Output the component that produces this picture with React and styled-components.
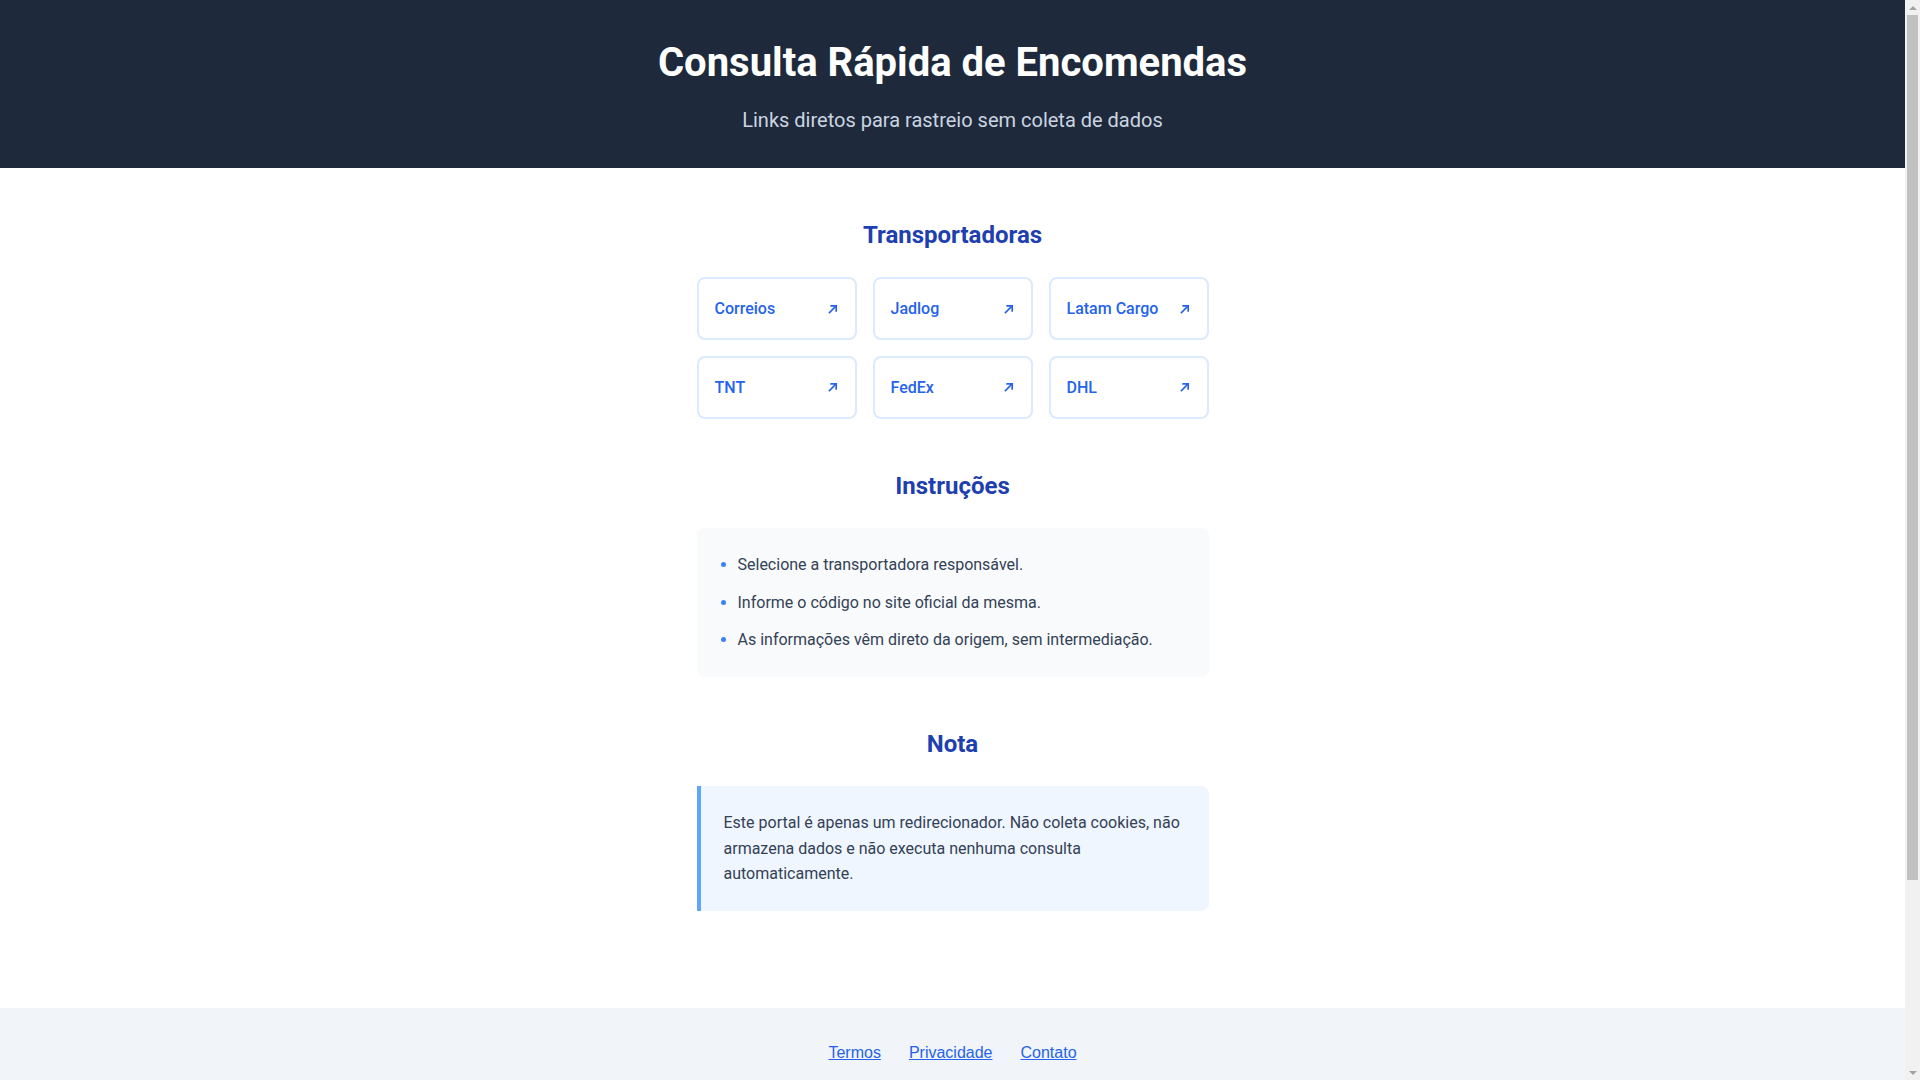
import React from "react";
import styled, { createGlobalStyle } from "styled-components";

const GlobalStyle = createGlobalStyle`
  html, body {
    margin: 0;
    padding: 0;
    background: #ffffff;
  }
  body {
    font-family: Roboto, "Noto Sans", Arial, sans-serif;
    line-height: 1.6;
    color: #334155;
  }
  * { box-sizing: border-box; }
`;

const Page = styled.div`
  display: flex;
  flex-direction: column;
  min-height: 100vh;
  margin-right: 15px;
`;

/* classic window scrollbar, drawn over the right edge of the viewport */
const ScrollTrack = styled.div`
  position: fixed;
  top: 0;
  right: 0;
  bottom: 0;
  width: 15px;
  background: #f1f1f1;
  display: flex;
  flex-direction: column;
  align-items: center;
  padding: 0 2px;
`;

const ScrollArrow = styled.div`
  flex: none;
  height: 15px;
  width: 100%;
  display: flex;
  align-items: center;
  justify-content: center;

  &::before {
    content: "";
    border-left: 4px solid transparent;
    border-right: 4px solid transparent;
    ${(p) =>
      p.$down
        ? "border-top: 4px solid #a3a3a3;"
        : "border-bottom: 4px solid #a3a3a3;"}
  }
`;

const ScrollThumb = styled.div`
  width: 100%;
  height: 865px;
  background: #c1c1c1;
`;

const ScrollSpacer = styled.div`
  flex: 1;
`;

const Header = styled.header`
  background: #1e293b;
  color: #ffffff;
  text-align: center;
  padding: 39px 16px 33px;
`;

const Title = styled.h1`
  margin: 0 0 18px;
  font-size: 40px;
  line-height: 48px;
  font-weight: 700;
`;

const Subtitle = styled.p`
  margin: 0;
  font-size: 20px;
  line-height: 30px;
  color: #cbd5e1;
`;

const Main = styled.main`
  width: 100%;
  max-width: 512px;
  margin: 0 auto;
  padding: 48px 0 97px;
  display: flex;
  flex-direction: column;
  gap: 48px;
`;

const Section = styled.section`
  display: flex;
  flex-direction: column;
`;

const SectionTitle = styled.h2`
  margin: 0 0 23px;
  font-size: 24px;
  line-height: 38.4px;
  font-weight: 700;
  color: #1e40af;
  text-align: center;
`;

const CarrierGrid = styled.div`
  display: grid;
  grid-template-columns: repeat(3, 1fr);
  gap: 16px;
`;

const CarrierLink = styled.a`
  display: flex;
  align-items: center;
  justify-content: space-between;
  padding: 16.5px 16px;
  border: 2px solid #dbeafe;
  border-radius: 8px;
  background: #ffffff;
  color: #2563eb;
  font-size: 16px;
  line-height: 25.6px;
  font-weight: 500;
  text-decoration: none;
`;

const ArrowIcon = styled.svg`
  width: 12px;
  height: 12px;
  flex: none;
  color: #2563eb;
`;

const InfoBox = styled.ul`
  margin: 0;
  list-style: none;
  background: #f8fafc;
  border-radius: 8px;
  padding: 24px;
  display: flex;
  flex-direction: column;
  gap: 12px;
`;

const InfoItem = styled.li`
  display: flex;
  align-items: center;
  gap: 12px;
  font-size: 16px;
  line-height: 25.6px;
  color: #334155;

  &::before {
    content: "";
    width: 5px;
    height: 5px;
    border-radius: 50%;
    background: #3b82f6;
    flex: none;
  }
`;

const NoteBox = styled.div`
  background: #eff6ff;
  border-left: 4px solid #60a5fa;
  border-radius: 0 8px 8px 0;
  padding: 24px 24px 24px 23px;
`;

const NoteText = styled.p`
  margin: 0;
  font-size: 16px;
  line-height: 25.6px;
  color: #334155;
`;

const Footer = styled.footer`
  background: #f1f5f9;
  padding: 32px 16px;
  min-height: 307px;
`;

const FooterNav = styled.nav`
  display: flex;
  justify-content: center;
  gap: 28px;
`;

const FooterLink = styled.a`
  font-family: "Liberation Sans", Arial, sans-serif;
  font-size: 16px;
  line-height: 25.6px;
  color: #2563eb;
  text-decoration: underline;
`;

const Arrow = () => (
  <ArrowIcon viewBox="0 0 12 12" fill="none" stroke="currentColor" strokeWidth="1.7" strokeLinecap="square">
    <path d="M2.5 9.5 L9 3" />
    <path d="M4.2 2.8 H9.2 V7.8" />
  </ArrowIcon>
);

const carriers = ["Correios", "Jadlog", "Latam Cargo", "TNT", "FedEx", "DHL"];

const instructions = [
  "Selecione a transportadora responsável.",
  "Informe o código no site oficial da mesma.",
  "As informações vêm direto da origem, sem intermediação.",
];

export default function App() {
  return (
    <>
      <GlobalStyle />
      <Page>
        <Header>
          <Title>Consulta Rápida de Encomendas</Title>
          <Subtitle>Links diretos para rastreio sem coleta de dados</Subtitle>
        </Header>
        <Main>
          <Section>
            <SectionTitle>Transportadoras</SectionTitle>
            <CarrierGrid>
              {carriers.map((c) => (
                <CarrierLink key={c} href="#">
                  <span>{c}</span>
                  <Arrow />
                </CarrierLink>
              ))}
            </CarrierGrid>
          </Section>
          <Section>
            <SectionTitle>Instruções</SectionTitle>
            <InfoBox>
              {instructions.map((t) => (
                <InfoItem key={t}>{t}</InfoItem>
              ))}
            </InfoBox>
          </Section>
          <Section>
            <SectionTitle>Nota</SectionTitle>
            <NoteBox>
              <NoteText>
                Este portal é apenas um redirecionador. Não coleta cookies, não armazena dados e não executa nenhuma
                consulta automaticamente.
              </NoteText>
            </NoteBox>
          </Section>
        </Main>
        <Footer>
          <FooterNav>
            <FooterLink href="#">Termos</FooterLink>
            <FooterLink href="#">Privacidade</FooterLink>
            <FooterLink href="#">Contato</FooterLink>
          </FooterNav>
        </Footer>
      </Page>
      <ScrollTrack aria-hidden="true">
        <ScrollArrow />
        <ScrollThumb />
        <ScrollSpacer />
        <ScrollArrow $down />
      </ScrollTrack>
    </>
  );
}
